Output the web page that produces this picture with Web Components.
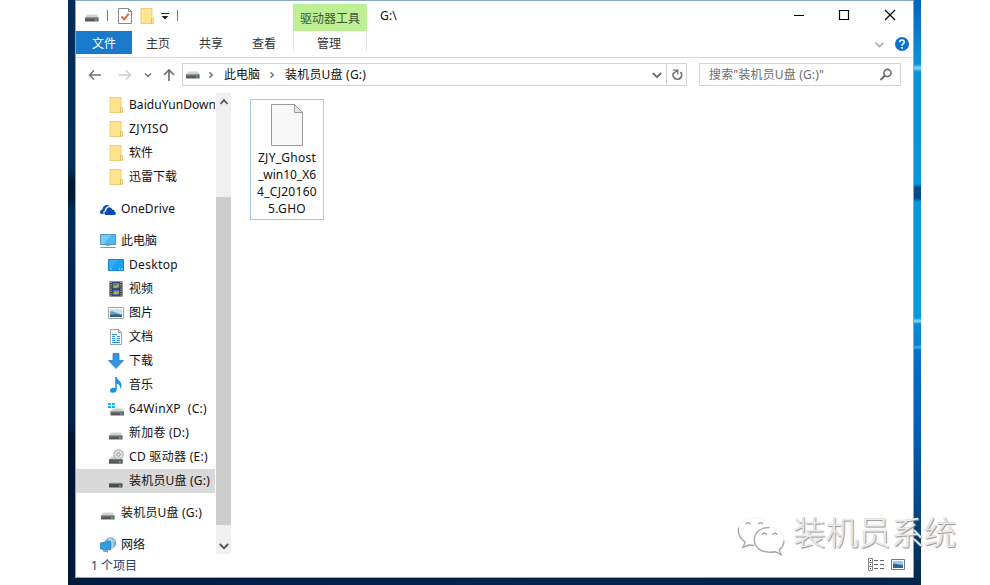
<!DOCTYPE html>
<html lang="zh-CN">
<head>
<meta charset="utf-8">
<title>G:\</title>
<style>
html, body { margin: 0; height: 100%; overflow: hidden; background: #fff; }
body { font: 12px/16px "Noto Sans", "Noto Sans CJK SC", sans-serif; color: #111; }
</style>
</head>
<body>
<desktop-area>
	<explorer-window>
		<title-bar slot="title"></title-bar>
		<ribbon-tabs slot="ribbon"></ribbon-tabs>
		<address-row slot="address"></address-row>
		<folder-tree slot="tree">
			<tree-group>
				<tree-item icon="folder" level="1" w="87">BaiduYunDown</tree-item>
				<tree-item icon="folder" level="1" w="40">ZJYISO</tree-item>
				<tree-item icon="folder" level="1">软件</tree-item>
				<tree-item icon="folder" level="1">迅雷下载</tree-item>
			</tree-group>
			<tree-group>
				<tree-item icon="cloud" w="54">OneDrive</tree-item>
			</tree-group>
			<tree-group>
				<tree-item icon="pc">此电脑</tree-item>
				<tree-item icon="desktop" level="1" w="49">Desktop</tree-item>
				<tree-item icon="video" level="1">视频</tree-item>
				<tree-item icon="picture" level="1">图片</tree-item>
				<tree-item icon="document" level="1">文档</tree-item>
				<tree-item icon="download" level="1">下载</tree-item>
				<tree-item icon="music" level="1">音乐</tree-item>
				<tree-item icon="windrive" level="1" w="78">64WinXP&nbsp; (C:)</tree-item>
				<tree-item icon="drive" level="1" w="60">新加卷 (D:)</tree-item>
				<tree-item icon="cd" level="1" w="79">CD 驱动器 (E:)</tree-item>
				<tree-item icon="usb" level="1" w="81" selected>装机员U盘 (G:)</tree-item>
			</tree-group>
			<tree-group>
				<tree-item icon="drive" w="81">装机员U盘 (G:)</tree-item>
			</tree-group>
			<tree-group>
				<tree-item icon="network">网络</tree-item>
			</tree-group>
		</folder-tree>
		<file-item slot="files">
			<fit-text w="58">ZJY_Ghost</fit-text>
			<fit-text w="58">_win10_X6</fit-text>
			<fit-text w="60">4_CJ20160</fit-text>
			<fit-text w="38">5.GHO</fit-text>
		</file-item>
		<status-bar slot="status"><fit-text w="46">1 个项目</fit-text></status-bar>
	</explorer-window>
	<water-mark slot="overlay">装机员系统</water-mark>
</desktop-area>

<script>
const DRIVE = `
	<path d="M3.500 7.500h9l2.500 3H1z" fill="#cfd1d1"/>
	<path d="M1 10.500h13.500v4H1z" fill="#565c5b"/>
	<path d="M1 10.500h13.500v1H1z" fill="#858b8a"/>
	<path d="M11 12.500h2v1h-2z" fill="#61e08b"/>`;

const ICONS = {
	drive: DRIVE,
	usb: `<path d="M2 9.500h11.500l1 1H1z" fill="#a9abab"/><path d="M1 10.500h13.500v4H1z" fill="#494f4f"/><path d="M11 12.500h2v1h-2z" fill="#61e08b"/>`,
	windrive: `<g transform="translate(1.500 0)">${DRIVE}</g>
		<path d="M0 2h3v2H0zM4 2h3v2H4zM0 5h3v2H0zM4 5h3v2H4z" fill="#1bb2e8"/>`,
	cd: `${DRIVE}<circle cx="10.500" cy="5.500" r="4.800" fill="#dcdcdc" stroke="#9d9d9d" stroke-width=".8"/>
		<circle cx="10.500" cy="5.500" r="1.600" fill="#fff" stroke="#777" stroke-width=".8"/>
		<path d="M1 10.500h13.500v4H1z" fill="#565c5b"/><path d="M11 12.500h2v1h-2z" fill="#61e08b"/>`,
	folder: `<path d="M2 .5h11v9l1.500 1v5H2z" fill="#ffe48f"/>
		<path d="M2 .5h11v9l1.500 1v5H2z" fill="none" stroke="#e9c767" stroke-width=".8"/>
		<path d="M12.500 10v5.500" stroke="#dcb652" stroke-width=".8"/>`,
	cloud: `<path d="M1.500 13C-.8 12.500-.3 9 2.300 8.600 2.500 5 6.500 2.600 9.700 5 6.500 5.300 4.700 7.500 4.900 9.500 3.200 10 3 12 3.900 13z" fill="#1257ae"/>
		<path d="M6 14c-2.500-.6-2-4 .2-4.100C6.300 6 11 5 12.200 8.600 14 8.300 14.700 9.700 14.400 10.700c2.200.4 1.900 3.100.1 3.300z" fill="#0a4cae"/>`,
	pc: `<path d="M.5 1.500h15v10H.5z" fill="#52b7ed" stroke="#3686b8" stroke-width=".8"/>
		<path d="M1 2h10L4 11H1z" fill="#86d2f6" opacity=".7"/><path d="M6 12h4v1H6z" fill="#9eb0bb"/>
		<path d="M.5 14h15v1H.5z" fill="#8e8f9b"/>`,
	desktop: `<path d="M.5 2.500h15v11H.5z" fill="#1ba0f2" stroke="#1681ce"/>
		<path d="M2 12h1.500M13 12h1.500M11 12h1" stroke="#d7efff"/><path d="M1 3h9l-6 8H1z" fill="#48b6f8" opacity=".5"/>`,
	video: `<path d="M1.500.5h13v15h-13z" fill="#25282b"/>
		<path d="M4.500 1.500h7v6h-7z" fill="#487fbe"/><path d="M4.500 8.500h7v6h-7z" fill="#4b6eab"/>
		<path d="M5 6l2-2 1 1 3-2v2l-3 2zM5 13l2-3 1 1 3-1v2l-2 1z" fill="#c9ad3c"/>
		<path d="M3 1v14M13 1v14" stroke="#e1e2e4" stroke-width="1.200" stroke-dasharray="1.200 1"/>`,
	picture: `<path d="M.5 2.500h15v11H.5z" fill="#fff" stroke="#9b9fa4"/>
		<path d="M2 4h12v8H2z" fill="#c4e4f6"/><path d="M2 6.500c3-1.500 6 2 12 2.500v3H2z" fill="#6f9eb6"/>
		<path d="M2 10c4-1 8-1 12 .5V12H2z" fill="#2b5d82"/>`,
	document: `<path d="M2.500.5h8l3 3v12h-11z" fill="#fff" stroke="#9aa5ab"/>
		<path d="M10.500.5v3h3" fill="none" stroke="#9aa5ab"/>
		<path d="M4 5.500h5M9 7.500h3M4 7.500h3M4 9.500h3M8.500 9.500H12M4 11.500h3M8.500 11.500H12M4 13.500h8" stroke="#2b94d6"/>`,
	download: `<path d="M5 .5h6v7h4.500L8 15.500.5 7.500H5z" fill="#3793e3" stroke="#2377c4" stroke-width=".7"/>`,
	music: `<path d="M7.200 0h1.500c.2 3 4.800 4.200 4.800 8 0 1.500-.6 3-1.500 4 .5-3-.7-4.800-3.300-5.500v6C8.700 14.500 7 15.800 5 15.800S2 14.700 2 13.400c0-1.800 2.500-3.200 5.200-2.400z" fill="#1a92e0"/>`,
	network: `<circle cx="10.500" cy="6" r="5.300" fill="#76bbdd" stroke="#4d92b9" stroke-width=".7"/>
		<path d="M8 2c3 0 4 2 7 2M10 1c2 3 3 6 2 10" fill="none" stroke="#c8e8f4"/>
		<path d="M.5 6l10-1.500v8.500L.5 12z" fill="#2e9ee5" stroke="#207db9" stroke-width=".8"/>
		<path d="M3 13v1.500l5 1v-2z" fill="#6b94b1"/>`,
	check: `<path d="M1.500.5h10l3 3v12h-13z" fill="#fff" stroke="#85888b"/><path d="M11.500.5v3h3" fill="none" stroke="#85888b"/>
		<path d="M4.500 8.500l2.700 3 4.500-6" fill="none" stroke="#df6736" stroke-width="2"/>`,
	menu: `<path d="M4 5.500h8" stroke="#222"/><path d="M4.500 8h7L8 11.500z" fill="#222"/>`,
	min: `<path d="M3 8.500h10" stroke="#000"/>`,
	max: `<path d="M3.500 3.500h9v9h-9z" fill="none" stroke="#000" stroke-width="1.200"/>`,
	close: `<path d="M3 3l10 10M13 3L3 13" stroke="#000" stroke-width="1.200"/>`,
	help: `<circle cx="8" cy="8" r="7" fill="#0c72cf"/><path d="M5.700 6.200c0-3 4.800-2.800 4.600-.2C10.200 7.700 8 7.700 8 9.700" fill="none" stroke="#fff" stroke-width="1.600"/><path d="M7.200 11h1.700v1.700H7.200z" fill="#fff"/>`,
	back: `<path d="M14 8H2.500M7 3.500L2.500 8 7 12.500" fill="none" stroke="currentColor" stroke-width="1.500"/>`,
	forward: `<path d="M2 8h11.500M9 3.500L13.500 8 9 12.500" fill="none" stroke="currentColor" stroke-width="1.500"/>`,
	up: `<path d="M8 14V3M3 8l5-5 5 5" fill="none" stroke="currentColor" stroke-width="1.700"/>`,
	down: `<path d="M3.800 6L8 10.200 12.200 6" fill="none" stroke="currentColor" stroke-width="1.900"/>`,
	downsmall: `<path d="M5 6.500l3 3 3-3" fill="none" stroke="currentColor" stroke-width="1.500"/>`,
	scrollup: `<path d="M4.500 10L8 6.200l3.500 3.800" fill="none" stroke="currentColor" stroke-width="1.800"/>`,
	right: `<path d="M6.500 5.200L9.300 8l-2.800 2.800" fill="none" stroke="currentColor" stroke-width="1.400"/>`,
	refresh: `<path d="M11.500 5A4.300 4.300 0 1 1 4.800 5.500" fill="none" stroke="currentColor" stroke-width="1.700"/>
		<path d="M4 3.200h4.800v4.300M8.500 3.500L5 6" fill="none" stroke="currentColor" stroke-width="1.300"/>`,
	search: `<circle cx="9.500" cy="6" r="3.600" fill="none" stroke="currentColor" stroke-width="1.600"/><path d="M7 8.500L2.500 13" stroke="currentColor" stroke-width="2.200"/>`,
	details: `<path d="M.5 1.500h4v12h-4zM.5 5.500h4M.5 9.500h4" fill="none" stroke="#888"/>
		<path d="M2 3.500h1M2 7.500h1M2 11.500h1" stroke="#333"/><path d="M6 3.500h4M12 3.500h4M6 7.500h4M12 7.500h4M6 11.500h4M12 11.500h4" stroke="#666"/>`,
	thumbs: `<path d="M1.500 2.500h13v10h-13z" fill="#fff" stroke="#657f9b"/><path d="M3 4h10v7H3z" fill="#98c8e6"/><path d="M3 7c3-1 6 1 10 1v3H3z" fill="#2f648c"/>`,
};

class AppIcon extends HTMLElement {
	constructor() {
		super();
		this.attachShadow({ mode: "open" });
	}
	connectedCallback() {
		const size = this.getAttribute("size") || 16;
		this.shadowRoot.innerHTML = `
			<style>
			:host { display: block; flex: none; width: ${size}px; height: ${size}px; }
			svg { display: block; }
			</style>
			<svg width="${size}" height="${size}" viewBox="0 0 16 16">${ICONS[this.getAttribute("name")]}</svg>`;
	}
}

// One line of text, spaced out to the width given in "w".
class FitText extends HTMLElement {
	constructor() {
		super();
		this.attachShadow({ mode: "open" });
		this.shadowRoot.innerHTML = `
			<style>
			:host { display: block; white-space: nowrap; }
			span { display: inline-block; }
			</style>
			<span><slot></slot></span>`;
	}
	connectedCallback() {
		const width = Number(this.getAttribute("w"));
		if (!width) return;
		const span = this.shadowRoot.querySelector("span");
		const natural = span.getBoundingClientRect().width;
		span.style.letterSpacing = (width - natural) / this.textContent.length + "px";
	}
}

class TreeItem extends HTMLElement {
	constructor() {
		super();
		this.attachShadow({ mode: "open" });
	}
	connectedCallback() {
		this.shadowRoot.innerHTML = `
			<style>
			:host { display: flex; align-items: center; gap: 5px; height: 24px; padding-left: 24px; overflow: hidden; }
			:host([level="1"]) { padding-left: 32px; }
			:host([selected]) { background: #d9d9d9; }
			</style>
			<app-icon name="${this.getAttribute("icon")}"></app-icon>
			<fit-text></fit-text>`;
		const label = document.createElement("fit-text");
		label.setAttribute("w", this.getAttribute("w") || "");
		label.textContent = this.textContent;
		this.shadowRoot.querySelector("fit-text").replaceWith(label);
	}
}

class TreeGroup extends HTMLElement {
	constructor() {
		super();
		this.attachShadow({ mode: "open" });
		this.shadowRoot.innerHTML = `<style>:host { display: block; }</style><slot></slot>`;
	}
}

class FolderTree extends HTMLElement {
	constructor() {
		super();
		this.attachShadow({ mode: "open" });
		this.shadowRoot.innerHTML = `
			<style>
			:host { display: flex; width: 156px; height: 464px; }
			.list { display: flex; flex-direction: column; gap: 8px; width: 139px; margin-right: 1px; padding-top: 1px; overflow: hidden; }
			.scroll { display: flex; flex-direction: column; width: 15px; height: 461px; margin-top: 1px; background: #f0f0f0; color: #555; }
			.scroll app-icon { margin: 1px 0 0 -.5px; }
			.thumb { height: 328px; margin: 87px 0 12px; background: #cdcdcd; }
			</style>
			<div class="list"><slot></slot></div>
			<div class="scroll">
				<app-icon name="scrollup"></app-icon>
				<div class="thumb"></div>
				<app-icon name="down"></app-icon>
			</div>`;
	}
}

class TitleBar extends HTMLElement {
	constructor() {
		super();
		this.attachShadow({ mode: "open" });
		this.shadowRoot.innerHTML = `
			<style>
			:host { display: grid; grid-template-columns: 217px 74px 1fr auto; height: 30px; }
			.quick { display: flex; align-items: center; padding-left: 8px; }
			.quick app-icon:first-child { margin-top: -3px; }
			i { width: 1px; height: 11px; background: #777; margin-top: -2px; }
			.context { display: flex; align-items: flex-end; justify-content: center; height: 23px; margin-top: 3px; padding-bottom: 4px; background: #bdf094; color: #3d5530; }
			.path { padding: 7px 0 0 13px; }
			.controls { display: flex; gap: 30px; padding: 6px 15px 0 0; }
			</style>
			<div class="quick">
				<app-icon name="drive"></app-icon><i style="margin-left: 7px"></i>
				<app-icon name="check" style="margin-left: 9px"></app-icon>
				<app-icon name="folder" style="margin-left: 6px"></app-icon>
				<app-icon name="menu" style="margin-left: 2px"></app-icon><i style="margin-left: 4px"></i>
			</div>
			<div class="context">驱动器工具</div>
			<fit-text class="path" w="17">G:\\</fit-text>
			<div class="controls">
				<app-icon name="min"></app-icon><app-icon name="max" style="margin-left: -1px"></app-icon><app-icon name="close"></app-icon>
			</div>`;
	}
}

class RibbonTabs extends HTMLElement {
	constructor() {
		super();
		this.attachShadow({ mode: "open" });
		this.shadowRoot.innerHTML = `
			<style>
			:host { display: flex; height: 26px; border-bottom: 1px solid #d6d8d9; color: #333; line-height: 26px; text-align: center; }
			.file { width: 56px; height: 23px; background: #1979ca; color: #fff; line-height: 25px; }
			.tab { width: 53px; text-indent: -1px; }
			.manage { box-sizing: border-box; width: 74px; height: 20px; margin-left: 2px; border: solid #e3e3e3; border-width: 0 1px; text-indent: -2px; }
			.end { display: flex; align-items: center; gap: 7px; margin-left: auto; padding-right: 3px; color: #aab0b6; }
			</style>
			<div class="file">文件</div>
			<div class="tab">主页</div>
			<div class="tab">共享</div>
			<div class="tab">查看</div>
			<div class="manage">管理</div>
			<div class="end"><app-icon name="down" size="15"></app-icon><app-icon name="help"></app-icon></div>`;
	}
}

class AddressRow extends HTMLElement {
	constructor() {
		super();
		this.attachShadow({ mode: "open" });
		this.shadowRoot.innerHTML = `
			<style>
			:host { display: flex; height: 29px; padding: 5px 12px 0 11px; color: #707070; }
			.nav { display: flex; align-items: center; width: 95px; height: 23px; }
			.box { box-sizing: border-box; display: flex; align-items: center; height: 23px; border: 1px solid #d4d4d4; }
			.path { width: 505px; padding-left: 2px; }
			.path fit-text { color: #111; }
			.refresh { display: flex; align-items: center; justify-content: center; width: 19px; height: 21px; border-left: 1px solid #d4d4d4; }
			.search { justify-content: space-between; width: 202px; margin-left: 12px; padding: 0 6px 0 9px; color: #6d6d6d; }
			</style>
			<div class="nav">
				<app-icon name="back"></app-icon>
				<app-icon name="forward" style="margin-left: 14px; color: #d0d0d0"></app-icon>
				<app-icon name="downsmall" style="margin-left: 7px"></app-icon>
				<app-icon name="up" style="margin-left: 5px"></app-icon>
			</div>
			<div class="box path">
				<app-icon name="drive" style="margin-top: -5px"></app-icon>
				<app-icon name="right" style="margin-left: 2px"></app-icon>
				<fit-text style="margin-left: 5px">此电脑</fit-text>
				<app-icon name="right" style="margin: 0 5px 0 4px"></app-icon>
				<fit-text w="81">装机员U盘 (G:)</fit-text>
				<app-icon name="down" style="margin: 0 1px 0 auto"></app-icon>
				<div class="refresh"><app-icon name="refresh"></app-icon></div>
			</div>
			<div class="box search">
				<fit-text w="115">搜索"装机员U盘 (G:)"</fit-text>
				<app-icon name="search"></app-icon>
			</div>`;
	}
}

class FileItem extends HTMLElement {
	constructor() {
		super();
		this.attachShadow({ mode: "open" });
		this.shadowRoot.innerHTML = `
			<style>
			:host { box-sizing: border-box; display: flex; flex-direction: column; align-items: center; width: 74px; height: 121px; padding-top: 4px; border: 1px solid #a3cdea; line-height: 17px; }
			svg { display: block; margin-bottom: 3px; }
			</style>
			<svg width="32" height="42" viewBox="0 0 32 42">
				<path d="M.5.5h23l8 8v33H.5z" fill="#f8f8f8" stroke="#999"/>
				<path d="M23.500.5v8h8z" fill="#e6e6e6" stroke="#999"/>
			</svg>
			<slot></slot>`;
	}
}

class StatusBar extends HTMLElement {
	constructor() {
		super();
		this.attachShadow({ mode: "open" });
		this.shadowRoot.innerHTML = `
			<style>
			:host { display: flex; align-items: center; height: 19px; padding: 0 7px 2px 15px; color: #23406e; }
			.views { display: flex; gap: 6px; margin: -1px 0 0 auto; }
			</style>
			<slot></slot>
			<div class="views"><app-icon name="details"></app-icon><app-icon name="thumbs"></app-icon></div>`;
	}
}

class ExplorerWindow extends HTMLElement {
	constructor() {
		super();
		this.attachShadow({ mode: "open" });
		this.shadowRoot.innerHTML = `
			<style>
			:host { box-sizing: border-box; display: flex; flex-direction: column; width: 839px; height: 578px; background: #fff; border: 1px solid #78afd5; border-top-color: #86a9c4; }
			.body { display: flex; flex: 1; }
			.files { padding: 7px 0 0 18px; }
			</style>
			<slot name="title"></slot>
			<slot name="ribbon"></slot>
			<slot name="address"></slot>
			<div class="body">
				<slot name="tree"></slot>
				<div class="files"><slot name="files"></slot></div>
			</div>
			<slot name="status"></slot>`;
	}
}

class DesktopArea extends HTMLElement {
	constructor() {
		super();
		this.attachShadow({ mode: "open" });
		this.shadowRoot.innerHTML = `
			<style>
			:host { position: relative; display: grid; grid-template-columns: 7px 839px 7px; grid-template-rows: 578px 7px; width: 853px; height: 585px; margin-left: 68px; }
			.left { background: linear-gradient(#052c56, #052e59 170px, #021834 182px, #021834 198px, #032b54 208px, #00224a 330px, #002249 420px, #00142f 440px, #001a3c); }
			.right { background: linear-gradient(#0763b8, #0a8ed8 55px, #0a8ed8 64px, #8dd6f5 68px, #0992d6 72px, #0795d9 184px, #07478c 188px, #07478c 198px, #0799da 202px, #079cdd 318px, #8de0f3 321px, #078bd9 324px, #0780d4 345px, #43aeea 347px, #0671cb 350px, #055eb5 430px, #034886 510px, #02294f 578px); }
			.bottom { grid-column: 1 / 4; background: linear-gradient(90deg, #001b3c, #00234c 50%, #00244b); }
			</style>
			<div class="left"></div>
			<slot></slot>
			<div class="right"></div>
			<div class="bottom"></div>
			<slot name="overlay"></slot>`;
	}
}

// Embossed mark lying over the corner of the window.
class WaterMark extends HTMLElement {
	constructor() {
		super();
		this.attachShadow({ mode: "open" });
		this.shadowRoot.innerHTML = `
			<style>
			:host { position: absolute; left: 668px; top: 509px; display: flex; gap: 7px; align-items: center; white-space: nowrap; font-size: 32.700px; font-weight: 300; line-height: 40px; color: #ececec; text-shadow: 1px 1px 1px #909090, 0 0 1px #bbb; }
			svg { margin-top: 6px; }
			</style>
			<svg width="50" height="42" viewBox="0 0 50 44">
				<path d="M1.500 13c-1 6 2 12 7 15.500l-2.500 5.500 6-2.500 6 .5" fill="none" stroke="#aaa" stroke-width="1.500"/>
				<path d="M1.500 13C3 6 10 3 19 3c7 0 14 3 16 9" fill="none" stroke="#f6f6f6"/>
				<path d="M34 13c-9 0-16 5-16 13s7 13 16 13c2 0 4 0 6-.5l6 3-2-5c3-2 5-5.500 5-9.500" fill="none" stroke="#aaa" stroke-width="1.500"/>
				<path d="M34 13c8 0 15 6 15 14" fill="none" stroke="#ececec"/>
				<path d="M9 9.500q3-3 5 0M22 9.500q3-3 5 0M26 20.500q3-3 5 0M37 20.500q3-3 5 0" fill="none" stroke="#999" stroke-width="1.300"/>
			</svg>
			<slot></slot>`;
	}
}

customElements.define("app-icon", AppIcon);
customElements.define("fit-text", FitText);
customElements.define("tree-item", TreeItem);
customElements.define("tree-group", TreeGroup);
customElements.define("folder-tree", FolderTree);
customElements.define("title-bar", TitleBar);
customElements.define("ribbon-tabs", RibbonTabs);
customElements.define("address-row", AddressRow);
customElements.define("file-item", FileItem);
customElements.define("status-bar", StatusBar);
customElements.define("explorer-window", ExplorerWindow);
customElements.define("desktop-area", DesktopArea);
customElements.define("water-mark", WaterMark);
</script>
</body>
</html>
